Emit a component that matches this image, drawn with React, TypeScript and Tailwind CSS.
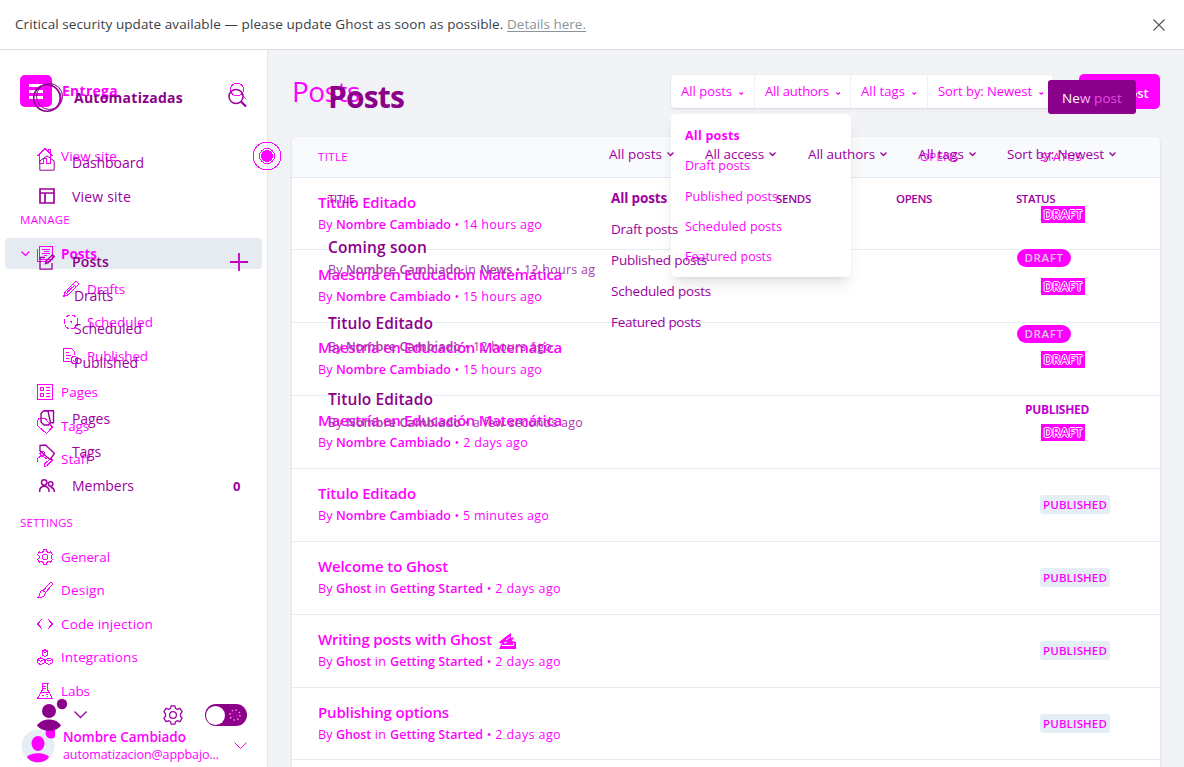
import React, { useLayoutEffect, useRef, useState } from "react";
import clsx from "clsx";

/* Text whose tracking is adjusted so that the line takes exactly `w` pixels. */
function T({ w, className, children }: { w: number; className?: string; children: React.ReactNode }) {
  const ref = useRef<HTMLSpanElement>(null);
  const [spacing, setSpacing] = useState(0);
  useLayoutEffect(() => {
    const measure = () => {
      const el = ref.current;
      if (!el) return;
      const old = el.style.letterSpacing;
      el.style.letterSpacing = "0px";
      const natural = el.getBoundingClientRect().width;
      el.style.letterSpacing = old;
      setSpacing((w - natural) / Math.max(1, (el.textContent || "").length));
    };
    measure();
    document.fonts?.ready.then(measure);
  }, [w]);
  return (
    <span ref={ref} style={{ letterSpacing: `${spacing}px` }} className={clsx("inline-block shrink-0 whitespace-pre", className)}>
      {children}
    </span>
  );
}

const icons: Record<string, React.ReactNode> = {
  home: <path d="M.5 8 8 .5 15.500 8M2.500 7v8.500h4v-5h3v5h4V7M11.500 3V1.500h2V5.500" />,
  house: <path d="M.8 6 8 .8 15.200 6v9.200H.8z" />,
  layout: <path d="M1 1h14v14H1zM1 5h14M6 5v10" strokeWidth="1.700" />,
  posts: <path d="M2.500.5h13v13h-13zM.5 2.500v13h13M5 3.500h8M6.500 5.500h5M5 7.500h8M6.500 9.500h3" />,
  edit: <path d="M6 3.500H1v11.700h12V9M6.500 9.500l.7-2.600L13.500.8l1.800 1.700L9 8.800z" strokeWidth="1.300" />,
  pencil: <path d="m.8 15.200 1-4L11.500 1.500a1.800 1.800 0 0 1 3 3L4.800 14.200zM2 11l3 3M10 3l3 3M4 11.500 11 4.800" />,
  clock: (
    <>
      <circle cx="8" cy="8" r="7" strokeDasharray="4.500 2.200" />
      <path d="M7 7.500h1.500v1" />
    </>
  ),
  published: <path d="M8 13.500H.5V.5h8l3 3V7M3 4.500h3M3 7.500h5M3 10.500h3M8 12a3.500 3.500 0 1 1 7 0 3.500 3.500 0 0 1-7 0m2 0 1.500 1.500 2-3" />,
  pages: <path d="M.5.5h15v15H.5zM3.500 3.500h3v3h-3zM3.500 9.500h3v3h-3zM9 3.500h4M9 6.500h4M9 9.500h4M9 12.500h4" />,
  copy: <path d="M5 .8h9.500v12H12M2 3.500 4.500 1H9l2.500 11.500-2 2.500H5L2 12z" strokeWidth="1.400" />,
  tag: <path d="M.5 2.500 1 8l8.500 7.500 6-6.500L8 .5H2zM3.500 3.500h1" />,
  tagWide: <path d="M1 1.500 6.500 1l9 8.500-4.500 6L1 7z" strokeWidth="1.300" />,
  staff: <path d="M3 2.500a2.200 2.200 0 1 1 4.400 0 2.200 2.200 0 0 1-4.400 0M.5 11V9c0-2 2-3.500 4.500-3.500S9 7 9.500 8.500M7.500 15.500l.5-3 6-5.500 1.500 2-5.500 5.500zM7.500 12v3" />,
  users: <path d="M2.500 4.500a2.700 2.700 0 1 1 5.400 0 2.700 2.700 0 0 1-5.400 0M.7 14v-1.500C.7 10 3 8.200 5.300 8.200S10 10 10 12.500V14M9.500 6a2.200 2.200 0 1 1 4.400 0 2.200 2.200 0 0 1-4.400 0M11.500 9.500c2.500 0 3.800 2 3.800 4.500" strokeWidth="1.500" />,
  gear: (
    <>
      <path d="M6.500.7h3l.5 2 1.500.8 2-.8 1.800 2.600L14 7v2l1.300 1.700-1.800 2.600-2-.8-1.500.8-.5 2h-3l-.5-2-1.500-.8-2 .8L.7 10.700 2 9V7L.7 5.300l1.800-2.600 2 .8L6 2.700z" />
      <circle cx="8" cy="8" r="2.700" />
    </>
  ),
  brush: <path d="m6 8.500 7-7.500c1.200-1 3 .5 2.200 1.800L8.500 10.500zM6 8.500c-2 0-3 1-3.200 3C2.600 13.500 2 14.500.5 15.500c4 .3 7.500-.5 8-5z" />,
  code: <path d="M5 3 .7 8 5 13M11 3l4.300 5L11 13" />,
  cubes: <path d="M5.500 2 8 .7 10.500 2v4L8 7.500 5.500 6zM5.500 2 8 3.500 10.500 2M.7 10.500 3.500 9l3.500 1.500v3.500l-3.500 1.500L.7 14zM.7 10.500l3 1.700 3.300-1.700M8.700 10.500 12 9l3.300 1.500V14L12 15.500 8.700 14zM8.700 10.500l3.300 1.700 3.300-1.700" />,
  flask: <path d="M4.500.5h7M5.500.5v6l-5 9h15l-5-9v-6M3.500 9.500h9M6 3.500h3M6 5.500h3M5 12.500h1.500M9 11.500h2M10 13.500h1" />,
};

function Icon({ name, className, size = 16, smooth = false }: { name: string; className?: string; size?: number; smooth?: boolean }) {
  return (
    <svg
      width={size}
      height={size}
      viewBox="0 0 16 16"
      fill="none"
      stroke="currentColor"
      strokeWidth="1"
      shapeRendering={smooth ? "auto" : "crispEdges"}
      className={clsx("shrink-0", className)}
    >
      {icons[name]}
    </svg>
  );
}

function Chevron({ w, className, sw = 1.3 }: { w: number; className?: string; sw?: number }) {
  return (
    <svg width={w} height={w / 2 + 1} viewBox={`0 0 ${w} ${w / 2 + 1}`} fill="none" stroke="currentColor" strokeWidth={sw} className={clsx("shrink-0", className)}>
      <path d={`M.5 .5 ${w / 2} ${w / 2} ${w - 0.5} .5`} />
    </svg>
  );
}

function NavRow({ icon, label, w, className }: { icon: string; label: string; w: number; className?: string }) {
  return (
    <a className={clsx("flex h-[33.5px] shrink-0 items-center gap-2 text-[13.5px]", className || "pl-[37px]")}>
      <Icon name={icon} />
      <T w={w}>{label}</T>
    </a>
  );
}

function Sidebar() {
  return (
    <aside className="flex h-[717px] w-[268px] shrink-0 flex-col overflow-hidden border-r border-[#e3e6ea] bg-white pt-[25px]">
      <div className="flex h-8 items-center">
        <div className="ml-5 flex size-8 flex-col justify-center gap-[3px] rounded-[5px] bg-[#ff00ff] pl-[9px]">
          <i className="h-[3px] w-3.5 bg-white" />
          <i className="h-[3px] w-3.5 bg-white" />
          <i className="h-[3px] w-3.5 bg-white" />
        </div>
        <T w={56} className="ml-2.5 text-sm font-bold">Entrega</T>
        <svg className="mt-[-1px] ml-[111px]" width="18" height="18" viewBox="0 0 18 18" fill="none" stroke="currentColor" shapeRendering="crispEdges">
          <circle cx="8" cy="7.500" r="6.500" />
          <path d="m12.500 12.500 5 5" />
        </svg>
      </div>
      <NavRow icon="home" label="View site" w={56} className="mt-[32px] pl-[37px]" />
      <div className="mt-[37.5px] flex h-5 shrink-0 items-center pl-5 text-[11.5px] font-medium">
        <T w={50}>MANAGE</T>
      </div>
      <div className="mx-[5px] mt-2 flex h-[31px] shrink-0 items-center rounded-[4px] bg-[#e6eaf1] pl-4">
        <Chevron w={9} />
        <Icon name="posts" className="ml-[7px]" />
        <T w={36} className="mt-0.5 ml-2 text-[13.5px] font-bold">Posts</T>
      </div>
      <NavRow icon="pencil" label="Drafts" w={38} className="mt-[3px] pl-[63px]" />
      <NavRow icon="clock" label="Scheduled" w={66} className="pl-[63px]" />
      <NavRow icon="published" label="Published" w={61} className="pl-[63px]" />
      <NavRow icon="pages" label="Pages" w={37} className="mt-[3px] pl-[37px]" />
      <NavRow icon="tag" label="Tags" w={28} />
      <NavRow icon="staff" label="Staff" w={29} />
      <div className="mt-[37px] flex h-5 shrink-0 items-center pl-5 text-[11.5px] font-medium">
        <T w={53}>SETTINGS</T>
      </div>
      <NavRow icon="gear" label="General" w={49} className="mt-[7px] pl-[37px]" />
      <NavRow icon="brush" label="Design" w={44} />
      <NavRow icon="code" label="Code injection" w={92} />
      <NavRow icon="cubes" label="Integrations" w={77} />
      <NavRow icon="flask" label="Labs" w={29} />
      <div className="mt-[21px] flex h-[34px] shrink-0 items-center pl-[21px]">
        <svg width="34" height="34" viewBox="0 0 34 34" className="shrink-0">
          <circle cx="17" cy="17" r="16.500" fill="#e6eef5" />
          <circle cx="30" cy="4" r="5.500" fill="currentColor" />
          <ellipse cx="17" cy="14.500" rx="6.500" ry="7.500" fill="currentColor" />
          <path d="M6 28c4-5 18-5 22 0-4 7-18 7-22 0" fill="currentColor" />
        </svg>
        <div className="ml-2 flex w-[171px] flex-col items-start leading-[18px]">
          <T w={123} className="text-[13.5px] font-semibold">Nombre Cambiado</T>
          <T w={156} className="text-[12.5px]">automatizacion@appbajo...</T>
        </div>
        <Chevron w={13} sw={1} />
      </div>
    </aside>
  );
}

interface Post {
  title: string;
  tw: number;
  parts: [string, boolean, number][];
  status: "DRAFT" | "PUBLISHED";
  pen?: boolean;
}

const byName = (when: string, w: number): [string, boolean, number][] => [
  ["By ", false, 18],
  ["Nombre Cambiado", true, 115],
  [" • " + when, false, w],
];
const byGhost: [string, boolean, number][] = [
  ["By ", false, 18],
  ["Ghost", true, 35],
  [" in ", false, 19],
  ["Getting Started", true, 93],
  [" • 2 days ago", false, 78],
];

const posts: Post[] = [
  { title: "Titulo Editado", tw: 98, parts: byName("14 hours ago", 91), status: "DRAFT" },
  { title: "Maestría en Educación Matemática", tw: 244, parts: byName("15 hours ago", 91), status: "DRAFT" },
  { title: "Maestría en Educación Matemática", tw: 244, parts: byName("15 hours ago", 91), status: "DRAFT" },
  { title: "Maestría en Educación Matemática", tw: 244, parts: byName("2 days ago", 77), status: "DRAFT" },
  { title: "Titulo Editado", tw: 98, parts: byName("5 minutes ago", 98), status: "PUBLISHED" },
  { title: "Welcome to Ghost", tw: 130, parts: byGhost, status: "PUBLISHED" },
  { title: "Writing posts with Ghost", tw: 174, parts: byGhost, status: "PUBLISHED", pen: true },
  { title: "Publishing options", tw: 131, parts: byGhost, status: "PUBLISHED" },
];

function Meta({ parts }: { parts: [string, boolean, number][] }) {
  return (
    <div className="flex h-5 items-center text-[12.5px]">
      {parts.map(([text, strong, w], i) => (
        <T key={i} w={w} className={strong ? "font-semibold" : "font-normal"}>{text}</T>
      ))}
    </div>
  );
}

const outline =
  "[text-shadow:1px_0_0_#fff,-1px_0_0_#fff,0_1px_0_#fff,0_-1px_0_#fff]";

function PostRow({ post, first }: { post: Post; first: boolean }) {
  return (
    <li className={clsx("flex shrink-0 border-b border-[#e5ecf3]", first ? "h-[72px]" : "h-[73px]")}>
      <div className="w-[748px] pt-[13px] pl-[26px]">
        <h3 className="mb-0.5 flex h-[22px] items-center text-[15px] font-semibold">
          <T w={post.tw}>{post.title}</T>
          {post.pen && (
            <svg className="mt-1 ml-1.5" width="19" height="17" viewBox="0 0 19 17" fill="none">
              <path d="M1 9 10 2l3-2v5l3-1-2 4 4 1v7H1l2-4z" fill="currentColor" />
              <path d="M4 12.500h12M3 12v-2M8 7l4-3M6 10l3-1M15.500 10v2.500" stroke="#fff" strokeWidth="1" />
            </svg>
          )}
        </h3>
        <Meta parts={post.parts} />
      </div>
      <div className="pt-[27px]">
        {post.status === "DRAFT" ? (
          <span className={clsx("mt-px ml-px flex h-[17px] w-11 items-center justify-center bg-[#ff00ff] text-[12px] font-semibold", outline)}>
            <T w={39}>DRAFT</T>
          </span>
        ) : (
          <span className="-mt-px flex h-[19px] w-[70px] items-center justify-center rounded-[3px] bg-[#e6eef5] text-[11.5px] font-semibold">
            <T w={64}>PUBLISHED</T>
          </span>
        )}
      </div>
    </li>
  );
}

function Filter({ label, w, className }: { label: string; w: number; className: string }) {
  return (
    <button className={clsx("flex h-full items-center border-r border-[#eef0f4] text-[13px] last:border-0", className)}>
      <T w={w}>{label}</T>
      <Chevron w={4.5} sw={1.1} className="mt-1 ml-[7px]" />
    </button>
  );
}

function Main() {
  return (
    <main className="flex h-[717px] flex-1 flex-col overflow-hidden bg-[#f2f3f7] pl-6">
      <div className="flex h-[87px] shrink-0">
        <h1 className="w-[379px] pt-[22px] text-[28px] leading-[38px] font-medium">
          <T w={68}>Posts</T>
        </h1>
        <div className="mt-[25px] flex h-[33px] w-[382px] rounded-[4px] bg-white shadow-sm">
          <Filter label="All posts" w={51} className="w-[84px] pl-2.5" />
          <Filter label="All authors" w={64} className="w-24 pl-2.5" />
          <Filter label="All tags" w={44} className="w-[77px] pl-2.5" />
          <Filter label="Sort by: Newest" w={94} className="flex-1 pl-2.5" />
        </div>
        <button className="mt-6 ml-[26px] flex h-[35px] w-[81px] items-center justify-center rounded-[5px] bg-[#ff00ff] pt-1 text-[13px] font-semibold text-white">
          <T w={58}>New post</T>
        </button>
      </div>
      <section className="w-[868px] rounded-t-[5px] bg-white shadow-sm">
        <div className="flex h-[41px] items-center rounded-t-[5px] border-b border-[#e0eaf2] bg-[#f9fafc] pl-[26px] text-[11.5px] font-normal">
          <span className="w-[602px]"><T w={30}>TITLE</T></span>
          <span className="w-[120px]"><T w={39}>OPENS</T></span>
          <T w={42}>STATUS</T>
        </div>
        <ul className="flex flex-col">
          {posts.map((p, i) => <PostRow key={i} post={p} first={i === 0 || i === 7} />)}
          <li className="h-10" />
        </ul>
      </section>
    </main>
  );
}

const menu: [string, number, number][] = [
  ["All posts", 55, 56],
  ["Draft posts", 65, 67],
  ["Published posts", 93, 96],
  ["Scheduled posts", 97, 100],
  ["Featured posts", 87, 90],
];

function OverlayRow({ icon, label, w, className }: { icon?: string; label: string; w: number; className?: string }) {
  return (
    <div className={clsx("flex h-[33.5px] shrink-0 items-center text-[14px]", className)}>
      {icon && <Icon name={icon} smooth className="mr-[17px] ml-[39px]" />}
      <T w={w} className={icon ? "" : "ml-[74px]"}>{label}</T>
    </div>
  );
}

function OverlaySidebar() {
  return (
    <div className="flex w-[268px] shrink-0 flex-col pt-8 text-[#9c009f]">
      <div className="flex h-8 items-center">
        <svg width="32" height="32" viewBox="0 0 32 32" fill="none" className="ml-8 shrink-0">
          <circle cx="15" cy="16" r="13.300" stroke="#850085" strokeWidth="1.600" />
          <circle cx="17.500" cy="14.500" r="13" stroke="#850085" strokeWidth="1" />
          <path d="M22 4.500A14 14 0 0 1 18 29C30 28 35 12 22 4.500" fill="#b000b8" />
        </svg>
        <T w={109} className="ml-2.5 text-sm font-bold text-[#8b008b]">Automatizadas</T>
        <svg className="ml-[45px]" width="19" height="20" viewBox="0 0 19 20" fill="none" stroke="currentColor" strokeWidth="1.500">
          <circle cx="8" cy="8.500" r="7" />
          <path d="m13 13.500 5 5" strokeWidth="2.200" />
        </svg>
      </div>
      <OverlayRow icon="house" label="Dashboard" w={72} className="mt-8" />
      <OverlayRow icon="layout" label="View site" w={59} />
      <div className="mt-8 flex h-[33.5px] shrink-0 items-center text-sm font-semibold">
        <Icon name="edit" smooth className="ml-[39px]" />
        <T w={37} className="ml-[17px] text-[#8b008b]">Posts</T>
        <svg className="ml-[121px]" width="18" height="18" viewBox="0 0 18 18" stroke="#c000c0" strokeWidth="1.800">
          <path d="M9 0v18M0 9h18" />
        </svg>
      </div>
      <OverlayRow label="Drafts" w={39} />
      <OverlayRow label="Scheduled" w={68} />
      <OverlayRow label="Published" w={64} />
      <OverlayRow icon="copy" label="Pages" w={38} className="mt-[22.5px]" />
      <OverlayRow icon="tagWide" label="Tags" w={29} />
      <div className="flex h-[35px] shrink-0 items-center text-sm">
        <Icon name="users" smooth className="ml-[39px]" />
        <T w={62} className="ml-[17px]">Members</T>
        <span className="ml-[99px] text-[13px] font-bold">0</span>
      </div>
      <div className="mt-[194.5px] flex h-[34px] items-center pl-[37px]">
        <svg width="32" height="34" viewBox="0 0 32 34" fill="#8b008b" className="shrink-0">
          <circle cx="25" cy="6" r="5.200" />
          <circle cx="12" cy="13" r="7" />
          <path d="M0 27.500c5-8 19-8 24 0-5 7-19 7-24 0" />
        </svg>
        <Chevron w={13} className="ml-[5px]" />
        <Icon name="gear" size={20} smooth className="ml-[76px]" />
        <div className="ml-[22px] flex h-[22px] w-[42px] items-center rounded-full bg-[#8b008b] pl-[1px]">
          <span className="size-[19px] rounded-full bg-white" />
          <svg width="14" height="14" viewBox="0 0 14 14" fill="none" className="ml-[3px]">
            <circle cx="7" cy="7" r="5" stroke="#f8d" strokeWidth="1.600" strokeDasharray="1.500 2.400" />
            <circle cx="7" cy="7" r="2.200" stroke="#f0f" strokeDasharray="1 1" />
          </svg>
        </div>
      </div>
    </div>
  );
}

function OverlayMain() {
  return (
    <div className="relative flex flex-1 flex-col text-[#9c009f]">
      <div className="flex h-[87px] shrink-0 pt-[30px]">
        <h1 className="w-[780px] pl-[60px] text-[30px] leading-[34px] font-bold text-[#8b008b]">
          <T w={76}>Posts</T>
        </h1>
        <button className="flex h-[34px] w-[88px] items-center justify-center rounded-[3px] bg-[#8b008b] pt-0.5 text-[13.5px] text-white">
          <T w={60}>
            <span className="font-medium">Ne</span>
            <span className="text-[#f7b5f7]">w </span>
            <span className="text-[#e04fe0]">post</span>
          </T>
        </button>
      </div>
      <div className="flex h-[34px] items-center pl-[341px] text-[13.5px]">
        <div className="flex w-24 items-center"><T w={53}>All posts</T><Chevron w={7} className="mt-px ml-[5px]" /></div>
        <div className="flex w-[103px] items-center"><T w={59}>All access</T><Chevron w={7} className="mt-px ml-[5px]" /></div>
        <div className="flex w-[110px] items-center"><T w={67}>All authors</T><Chevron w={7} className="mt-px ml-[5px]" /></div>
        <div className="flex w-[89px] items-center"><T w={46}>All tags</T><Chevron w={7} className="mt-px ml-[5px]" /></div>
        <div className="flex items-center"><T w={97}>Sort by: Newest</T><Chevron w={7} className="mt-px ml-[5px]" /></div>
      </div>
      <div className="mt-[18px] flex h-5 items-center pl-[60px] text-[11.5px] font-semibold">
        <span className="w-[448px]"><T w={27} className="font-normal">TITLE</T></span>
        <span className="w-[120px]"><T w={35}>SENDS</T></span>
        <span className="w-[120px]"><T w={36}>OPENS</T></span>
        <T w={39}>STATUS</T>
      </div>
      <div className="flex h-[76px] pt-[27px] pl-[60px]">
        <div className="w-[688px]">
          <h3 className="flex h-6 items-center text-[15.5px] font-semibold text-[#8b008b]"><T w={99}>Coming soon</T></h3>
          <div className="w-[267px] overflow-hidden text-[#a83dac]">
            <Meta parts={[["By ", false, 18], ["Nombre Cambiado", true, 115], [" in ", false, 19], ["News", true, 32], [" • 12 hours ago", false, 91]]} />
          </div>
        </div>
        <span className="mt-[13px] ml-px flex h-[18px] w-[54px] items-center justify-center rounded-full bg-[#ff00ff] text-[11.5px] text-[#dfc9df]">
          <T w={39} className="font-semibold">DRAFT</T>
        </span>
      </div>
      <div className="flex h-[76px] pt-[27px] pl-[60px]">
        <div className="w-[688px]">
          <h3 className="mb-px flex h-6 items-center text-[15.5px] font-semibold text-[#8b008b]"><T w={105}>Titulo Editado</T></h3>
          <div className="text-[#a83dac]"><Meta parts={byName("12 hours ago", 91)} /></div>
        </div>
        <span className="mt-[13px] ml-px flex h-[18px] w-[54px] items-center justify-center rounded-full bg-[#ff00ff] text-[11.5px] text-[#dfc9df]">
          <T w={39} className="font-semibold">DRAFT</T>
        </span>
      </div>
      <div className="flex h-[76px] pt-[27px] pl-[60px]">
        <div className="w-[697px]">
          <h3 className="mb-px flex h-6 items-center text-[15.5px] font-semibold text-[#8b008b]"><T w={105}>Titulo Editado</T></h3>
          <div className="text-[#a83dac]"><Meta parts={byName("a few seconds ago", 122)} /></div>
        </div>
        <span className="mt-[13px] text-[12px] font-bold text-[#c000d0]"><T w={64}>PUBLISHED</T></span>
      </div>
      <div className="absolute top-[133px] left-[343px] flex flex-col text-[13.5px]">
        {menu.map(([label, , w], i) => (
          <div key={label} className="flex h-[31px] items-center">
            <T w={w} className={i === 0 ? "font-bold" : ""}>{label}</T>
          </div>
        ))}
      </div>
    </div>
  );
}

export default function App() {
  return (
    <div className="relative h-[767px] w-[1184px] overflow-hidden bg-white font-['Open_Sans','Noto_Sans',sans-serif] text-[#ff00ff]">
      <header className="flex h-[50px] items-center border-b border-[#dcdcdc] pl-[15px] text-[13.5px] text-[#394047]">
        <T w={492}>{"Critical security update available — please update Ghost as soon as possible. "}</T>
        <a className="text-[#8b9499]"><T w={79} className="underline underline-offset-2">Details here.</T></a>
        <svg className="ml-[567px]" width="12" height="12" viewBox="0 0 12 12" fill="none" stroke="#555" strokeWidth="1.100">
          <path d="m.5.5 11 11M11.500.5l-11 11" />
        </svg>
      </header>
      <div className="flex">
        <Sidebar />
        <Main />
      </div>
      <div className="absolute top-[114px] left-[671px] flex h-[163px] w-[180px] flex-col rounded-[5px] bg-white pt-[7px] pl-3.5 text-[12.5px] shadow-lg">
        {menu.map(([label, w], i) => (
          <div key={label} className="flex h-[30.4px] shrink-0 items-center">
            <T w={w} className={i === 0 ? "font-bold" : ""}>{label}</T>
          </div>
        ))}
      </div>
      <svg className="absolute top-[141px] left-[252px]" width="30" height="30" viewBox="0 0 30 30" fill="none" stroke="currentColor" shapeRendering="crispEdges">
        <circle cx="15" cy="15" r="14" />
        <circle cx="15" cy="15" r="7.500" />
        <circle cx="15" cy="15" r="5.500" fill="currentColor" />
      </svg>
      <div className="absolute inset-x-0 top-[50px] flex h-[717px]">
        <OverlaySidebar />
        <OverlayMain />
      </div>
    </div>
  );
}
